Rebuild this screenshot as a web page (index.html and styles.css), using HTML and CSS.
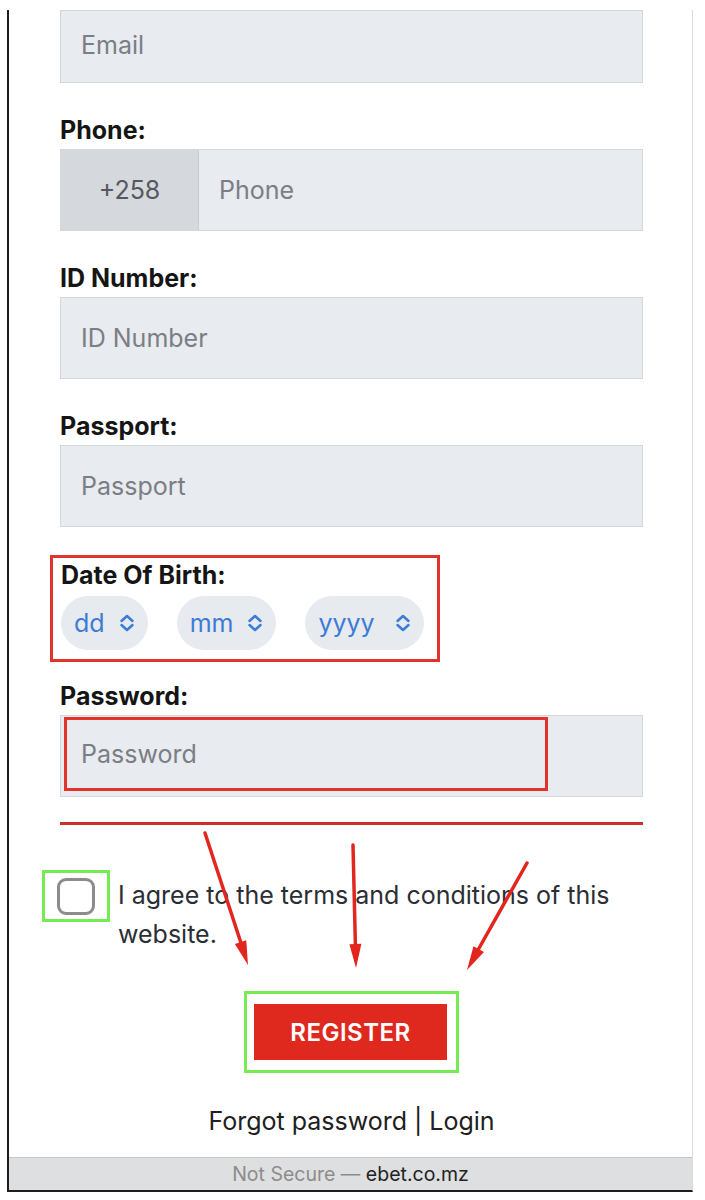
FILE: index.html
```html
<!DOCTYPE html>
<html lang="en">
<head>
    <meta charset="UTF-8">
    <meta name="viewport" content="width=device-width, initial-scale=1.0">
    <title>Register</title>
    <link rel="stylesheet" href="styles.css">
</head>
<body>

<div class="frame">
    <div class="page">
        <form class="register-form" onsubmit="return false;">
            <input type="email" class="field field-email" placeholder="Email">

            <label class="label" for="phone">Phone:</label>
            <div class="phone-group">
                <span class="prefix">+258</span>
                <input type="tel" id="phone" class="phone-input" placeholder="Phone">
            </div>

            <label class="label" for="id-number">ID Number:</label>
            <input type="text" id="id-number" class="field" placeholder="ID Number">

            <label class="label" for="passport">Passport:</label>
            <input type="text" id="passport" class="field" placeholder="Passport">

            <div class="dob-box">
                <div class="label">Date Of Birth:</div>
                <div class="pills">
                    <span class="pill">dd
                        <svg class="chevron" width="16" height="18" viewBox="0 0 16 18"><path d="M2.5 7 L8 2 L13.5 7 M2.5 11 L8 16 L13.5 11"/></svg>
                    </span>
                    <span class="pill">mm
                        <svg class="chevron" width="16" height="18" viewBox="0 0 16 18"><path d="M2.5 7 L8 2 L13.5 7 M2.5 11 L8 16 L13.5 11"/></svg>
                    </span>
                    <span class="pill pill-year">yyyy
                        <svg class="chevron" width="16" height="18" viewBox="0 0 16 18"><path d="M2.5 7 L8 2 L13.5 7 M2.5 11 L8 16 L13.5 11"/></svg>
                    </span>
                </div>
            </div>

            <label class="label label-password" for="password">Password:</label>
            <div class="password-wrap">
                <input type="password" id="password" class="password-input" placeholder="Password">
            </div>

            <div class="divider"></div>

            <div class="agree">
                <div class="check-box"><span class="check"></span></div>
                <div class="agree-text">I agree to the terms and conditions of this website.</div>
            </div>

            <div class="register-row">
                <div class="register-box">
                    <button class="register-btn">REGISTER</button>
                </div>
            </div>

            <div class="links">Forgot password | Login</div>
        </form>
    </div>
    <div class="status-bar"><span class="not-secure">Not Secure —&nbsp;</span><span class="domain">ebet.co.mz</span></div>
</div>

<svg class="arrows" width="705" height="1200" viewBox="0 0 705 1200">
    <g stroke="#e2261d" stroke-width="3.5" stroke-linecap="round" fill="none">
        <line x1="205" y1="833" x2="241" y2="943"/>
        <line x1="353" y1="845" x2="355.4" y2="945"/>
        <line x1="527" y1="863" x2="478" y2="950"/>
    </g>
    <g fill="#e2261d">
        <polygon points="248,965 234.85,944.04 246.27,940.32"/>
        <polygon points="356,968 349.41,944.16 361.41,943.86"/>
        <polygon points="467,970 473.51,946.13 483.97,951.99"/>
    </g>
</svg>

</body>
</html>
```

FILE: styles.css
```css
body {
    margin: 0;
    background: #fff;
    font-family: Inter, "Noto Sans", sans-serif;
}
.frame {
    margin: 10px 0 0 7px;
    width: 683px;
    border-left: 2px solid #1d1d1d;
    border-right: 1px solid #dadada;
    border-bottom: 2px solid #1d1d1d;
}
.page {
    box-sizing: border-box;
    height: 1147px;
    padding: 0 49px 0 51px;
}
.field,
.phone-input,
.password-input {
    font-family: inherit;
    font-size: 25px;
    color: #333;
    outline: none;
}
.field::placeholder,
.phone-input::placeholder,
.password-input::placeholder {
    color: #7b7e84;
}
.field {
    display: block;
    width: 100%;
    height: 82px;
    box-sizing: border-box;
    margin: 0;
    padding: 0 20px;
    background: #e8ebef;
    border: 1px solid #d4d7db;
    border-radius: 0;
}
.field-email {
    height: 73px;
    padding-bottom: 4px;
}
.label {
    display: block;
    margin: 32px 0 4px;
    font-size: 25px;
    font-weight: 700;
    line-height: 30px;
    color: #151515;
}
.phone-group {
    display: flex;
    height: 82px;
    box-sizing: border-box;
    background: #e8ebef;
    border: 1px solid #d4d7db;
}
.prefix {
    display: flex;
    align-items: center;
    justify-content: center;
    width: 138px;
    box-sizing: border-box;
    background: #d5d8dd;
    border-right: 1px solid #c8cbd0;
    font-size: 25px;
    color: #55585d;
}
.phone-input {
    flex: 1;
    min-width: 0;
    border: none;
    background: transparent;
    padding: 0 20px;
}
.dob-box {
    box-sizing: border-box;
    width: 390px;
    height: 107px;
    margin: 28px 0 0 -10px;
    padding: 2px 0 0 8px;
    border: 3px solid #e2332b;
}
.dob-box .label {
    margin: 0 0 6px;
}
.pills {
    display: flex;
    gap: 29px;
}
.pill {
    display: flex;
    align-items: center;
    height: 54px;
    padding: 0 13px;
    border-radius: 27px;
    background: #e7eaef;
    color: #3c7bd6;
    font-size: 25px;
}
.chevron {
    margin-left: 14px;
    fill: none;
    stroke: #3c7bd6;
    stroke-width: 2.5;
    stroke-linecap: round;
    stroke-linejoin: round;
}
.pill-year .chevron {
    margin-left: 20px;
}
.label-password {
    margin: 19px 0 4px;
}
.password-wrap {
    height: 82px;
    box-sizing: border-box;
    padding: 1px 0 0 3px;
    background: #e8ebef;
    border: 1px solid #d4d7db;
}
.password-input {
    display: block;
    width: 484px;
    height: 74px;
    box-sizing: border-box;
    margin: 0;
    padding: 0 14px;
    background: transparent;
    border: 3px solid #e2332b;
}
.divider {
    height: 3px;
    margin-top: 25px;
    background: #cf2f28;
}
.agree {
    display: flex;
    align-items: flex-start;
    margin: 45px 0 0 -18px;
}
.check-box {
    display: flex;
    align-items: center;
    justify-content: center;
    flex: none;
    width: 68px;
    height: 52px;
    box-sizing: border-box;
    border: 3px solid #74ec52;
}
.check {
    width: 38px;
    height: 37px;
    box-sizing: border-box;
    border: 3px solid #8c8c8c;
    border-radius: 9px;
    background: #fff;
}
.agree-text {
    flex: 1;
    margin: 6px 0 0 8px;
    font-size: 25px;
    line-height: 39px;
    color: #2b2e34;
}
.register-row {
    display: flex;
    justify-content: center;
    margin-top: 37px;
}
.register-box {
    padding: 10px 9px 10px 7px;
    border: 3px solid #74ec52;
}
.register-btn {
    display: block;
    width: 193px;
    height: 56px;
    border: none;
    background: #df291f;
    color: #fff;
    font-family: inherit;
    font-size: 24px;
    font-weight: 600;
    letter-spacing: 0.5px;
    cursor: pointer;
}
.links {
    margin-top: 31px;
    text-align: center;
    font-size: 25px;
    line-height: 35px;
    color: #202020;
}
.status-bar {
    display: flex;
    align-items: center;
    justify-content: center;
    height: 33px;
    box-sizing: border-box;
    background: #dedfe0;
    border-top: 1px solid #c6c6c6;
    font-size: 19.5px;
}
.not-secure {
    color: #8c8c8c;
}
.domain {
    color: #222;
}
.arrows {
    position: absolute;
    top: 0;
    left: 0;
    pointer-events: none;
}
```
